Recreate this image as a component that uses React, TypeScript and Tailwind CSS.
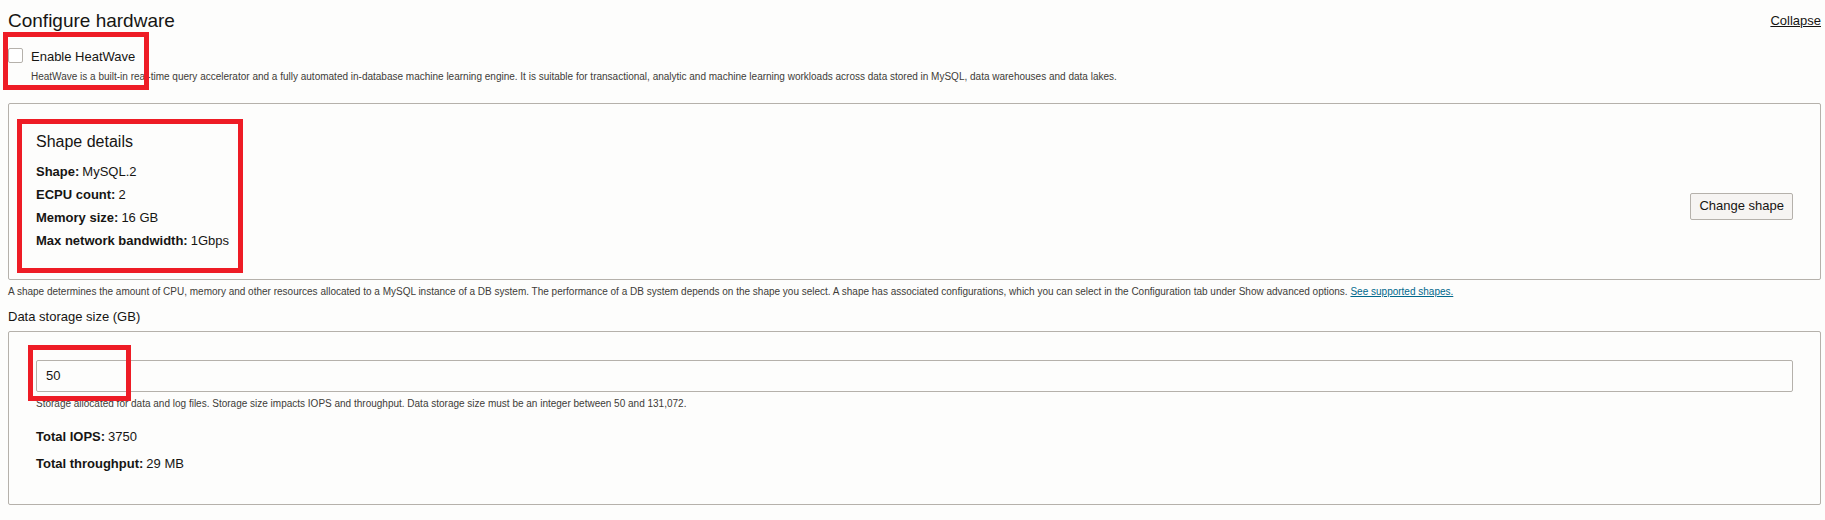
import { useState } from "react";

const shapeDetails = [
  { label: "Shape:", value: "MySQL.2" },
  { label: "ECPU count:", value: "2" },
  { label: "Memory size:", value: "16 GB" },
  { label: "Max network bandwidth:", value: "1Gbps" },
];

const storageTotals = [
  { label: "Total IOPS:", value: "3750" },
  { label: "Total throughput:", value: "29 MB" },
];

function Detail({ label, value }: { label: string; value: string }) {
  return (
    <div className="flex gap-[3px]">
      <dt className="font-bold">{label}</dt>
      <dd>{value}</dd>
    </div>
  );
}

export default function App() {
  const [heatWave, setHeatWave] = useState(false);
  const [storage, setStorage] = useState("50");

  return (
    <main className="min-h-screen bg-[#fdfdfc] pt-[9px] pr-1 pb-3 pl-2 font-['Liberation_Sans',Arial,sans-serif] text-[13px] text-[#161513]">
      <header className="flex items-center justify-between">
        <h1 className="text-[19px] leading-6">Configure hardware</h1>
        <a href="#collapse" className="leading-6 underline">
          Collapse
        </a>
      </header>

      <section className="relative mt-[14px]">
        <div className="flex items-start gap-2">
          <input
            id="heatwave"
            type="checkbox"
            checked={heatWave}
            onChange={(e) => setHeatWave(e.target.checked)}
            className="mt-px size-[15px] appearance-none rounded-xs border border-[#b5b1ab] bg-white checked:bg-[#227e9e]"
          />
          <label htmlFor="heatwave" className="leading-5">
            Enable HeatWave
          </label>
        </div>
        <p className="mt-[2px] pl-[23px] text-[10px] leading-4 text-[#403c38]">
          HeatWave is a built-in real-time query accelerator and a fully automated in-database machine learning engine. It
          is suitable for transactional, analytic and machine learning workloads across data stored in MySQL, data
          warehouses and data lakes.
        </p>
        <div className="pointer-events-none absolute -top-[15px] -left-[5px] h-[58px] w-[146px] border-5 border-[#ee1c25]" />
      </section>

      <section className="relative mt-[18px] rounded-xs border border-[#b5b1ab] p-[27px]">
        <h2 className="mb-[7px] text-base leading-[22px]">Shape details</h2>
        <div className="flex items-center justify-between">
          <dl className="leading-[23px]">
            {shapeDetails.map((d) => (
              <Detail key={d.label} {...d} />
            ))}
          </dl>
          <button type="button" className="h-[27px] rounded-xs border border-[#b5b1ab] bg-[#f6f4f2] px-2">
            Change shape
          </button>
        </div>
        <div className="pointer-events-none absolute top-[15px] left-2 h-[154px] w-[226px] border-5 border-[#ee1c25]" />
      </section>
      <p className="mt-1 text-[10px] leading-4 text-[#403c38]">
        A shape determines the amount of CPU, memory and other resources allocated to a MySQL instance of a DB system.
        The performance of a DB system depends on the shape you select. A shape has associated configurations, which you
        can select in the Configuration tab under Show advanced options.{" "}
        <a href="#shapes" className="text-[#00688c] underline">
          See supported shapes.
        </a>
      </p>

      <label htmlFor="storage" className="mt-[7px] block leading-5">
        Data storage size (GB)
      </label>
      <section className="relative mt-1 rounded-xs border border-[#b5b1ab] px-[27px] pt-7 pb-[27px]">
        <input
          id="storage"
          type="text"
          value={storage}
          onChange={(e) => setStorage(e.target.value)}
          className="block h-8 w-full rounded-xs border border-[#b5b1ab] px-[9px] pb-[2px]"
        />
        <p className="mt-1 text-[10px] leading-4 text-[#403c38]">
          Storage allocated for data and log files. Storage size impacts IOPS and throughput. Data storage size must be an
          integer between 50 and 131,072.
        </p>
        <dl className="mt-[11px] leading-[27px]">
          {storageTotals.map((d) => (
            <Detail key={d.label} {...d} />
          ))}
        </dl>
        <div className="pointer-events-none absolute top-[13px] left-[19px] h-14 w-[103px] border-5 border-[#ee1c25]" />
      </section>
    </main>
  );
}
